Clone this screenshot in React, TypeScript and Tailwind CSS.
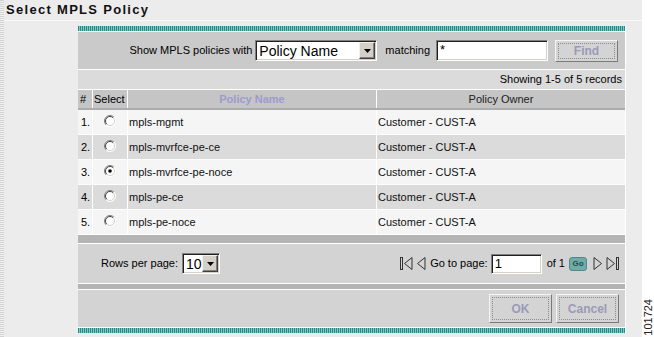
import React from "react";

const font = { fontFamily: "'Liberation Sans', Arial, sans-serif" };

const tealBar =
  "h-[5px] bg-[repeating-linear-gradient(90deg,#2a8c87_0px,#2a8c87_1px,#7fc6c1_1px,#7fc6c1_2px)]";

function Radio({ checked }: { checked?: boolean }) {
  return (
    <svg width="12" height="12" viewBox="0 0 12 12">
      <circle cx="6" cy="6" r="5.5" fill="#ffffff" />
      <path d="M2.1 9.9 A5.5 5.5 0 0 1 9.9 2.1" fill="none" stroke="#808080" strokeWidth="1" />
      <path d="M2.8 9.2 A4.5 4.5 0 0 1 9.2 2.8" fill="none" stroke="#404040" strokeWidth="1" />
      <path d="M9.9 2.1 A5.5 5.5 0 0 1 2.1 9.9" fill="none" stroke="#ffffff" strokeWidth="1" />
      <path d="M9.2 2.8 A4.5 4.5 0 0 1 2.8 9.2" fill="none" stroke="#d4d0c8" strokeWidth="1" />
      {checked && <circle cx="6" cy="6" r="1.8" fill="#000" />}
    </svg>
  );
}

function ArrowBtn() {
  return (
    <div className="w-[16px] h-[17px] bg-[#d4d0c8] border-t border-l border-t-[#f0f0f0] border-l-[#f0f0f0] border-b border-r border-b-[#404040] border-r-[#404040] flex items-center justify-center shadow-[inset_-1px_-1px_0_#808080]">
      <svg width="7" height="4" viewBox="0 0 7 4">
        <path d="M0 0 H7 L3.5 4 Z" fill="#000" />
      </svg>
    </div>
  );
}

function Inset({ className, children }: { className?: string; children?: React.ReactNode }) {
  return (
    <div
      className={
        "bg-white border-t border-l border-t-[#808080] border-l-[#808080] border-b border-r border-b-white border-r-white shadow-[inset_1px_1px_0_#202020,inset_-1px_-1px_0_#d4d0c8] " +
        (className ?? "")
      }
    >
      {children}
    </div>
  );
}

function DisabledButton({ label, className }: { label: string; className?: string }) {
  return (
    <div
      className={
        "bg-[#d4d4d4] border border-t-[#f4f4f4] border-l-[#f4f4f4] border-b-[#7a7a7a] border-r-[#7a7a7a] p-[2px] " +
        (className ?? "")
      }
    >
      <div className="w-full h-full border border-dotted border-[#8c8c8c] flex items-center justify-center text-[12px] font-bold text-[#9a9ab8]">
        {label}
      </div>
    </div>
  );
}

function FirstIcon() {
  return (
    <svg width="13" height="15" viewBox="0 0 13 15">
      <rect x="0.5" y="1.5" width="2" height="12" fill="none" stroke="#333" strokeWidth="1" />
      <path d="M12 1.5 L4.5 7.5 L12 13.5 Z" fill="none" stroke="#333" strokeWidth="1" />
    </svg>
  );
}
function PrevIcon() {
  return (
    <svg width="10" height="15" viewBox="0 0 10 15">
      <path d="M9 1.5 L1.5 7.5 L9 13.5 Z" fill="none" stroke="#333" strokeWidth="1" />
    </svg>
  );
}
function NextIcon() {
  return (
    <svg width="10" height="15" viewBox="0 0 10 15">
      <path d="M1 1.5 L8.5 7.5 L1 13.5 Z" fill="none" stroke="#333" strokeWidth="1" />
    </svg>
  );
}
function LastIcon() {
  return (
    <svg width="13" height="15" viewBox="0 0 13 15">
      <path d="M1 1.5 L8.5 7.5 L1 13.5 Z" fill="none" stroke="#333" strokeWidth="1" />
      <rect x="10.5" y="1.5" width="2" height="12" fill="none" stroke="#333" strokeWidth="1" />
    </svg>
  );
}

const rows = [
  { n: "1.", name: "mpls-mgmt", checked: false },
  { n: "2.", name: "mpls-mvrfce-pe-ce", checked: false },
  { n: "3.", name: "mpls-mvrfce-pe-noce", checked: true },
  { n: "4.", name: "mpls-pe-ce", checked: false },
  { n: "5.", name: "mpls-pe-noce", checked: false },
];

export default function App() {
  return (
    <div className="flex w-[654px] h-[337px] overflow-hidden bg-white text-black" style={font}>
      {/* main gray area */}
      <div className="flex w-[642px] h-full bg-[#ececec]">
        <div className="w-[4px] h-full bg-[repeating-linear-gradient(180deg,#d2d2d2_0px,#d2d2d2_1px,#f2f2f2_1px,#f2f2f2_2px)]" />
        <div className="flex flex-col w-[638px]">
          <div className="h-[20px] flex items-center pl-[2px] text-[13px] font-bold tracking-[1.3px] text-[#111]">
            Select MPLS Policy
          </div>
          <div className="h-[1px] bg-[#f9f9f9]" />
          <div className="ml-[74px] mt-[5px] w-[548px] border-r border-white flex flex-col">
            <div className={tealBar} />
            <div className="h-[1px] bg-white" />
            {/* search */}
            <div className="h-[37px] bg-[#cacaca] flex items-center justify-end pr-[7px] text-[11px]">
              <span className="mr-[3px]">Show MPLS policies with</span>
              <Inset className="w-[122px] h-[21px] flex items-center justify-between pl-[3px] pr-[1px]">
                <span className="text-[14px] leading-none">Policy Name</span>
                <ArrowBtn />
              </Inset>
              <span className="ml-[8px] mr-[6px]">matching</span>
              <Inset className="w-[112px] h-[21px] flex items-start pl-[3px] pt-[2px]">
                <span className="text-[13px] leading-none">*</span>
              </Inset>
              <DisabledButton label="Find" className="ml-[7px] w-[63px] h-[22px]" />
            </div>
            <div className="h-[1px] bg-white" />
            <div className="h-[19px] bg-[#dbdbdb] flex items-center justify-end pr-[3px] text-[11px]">
              Showing 1-5 of 5 records
            </div>
            <div className="h-[1px] bg-white" />
            {/* header */}
            <div className="grid grid-cols-[15px_35px_249px_248px] h-[20px] bg-[#c5c5c5] border-b-2 border-[#acacac] text-[11px]">
              <div className="border-r border-white flex items-center pl-[2px]">#</div>
              <div className="border-r border-white flex items-center pl-[1px]">Select</div>
              <div className="border-r border-white flex items-center justify-center font-bold text-[#9c9ad0]">
                Policy Name
              </div>
              <div className="flex items-center justify-center text-[#222]">Policy Owner</div>
            </div>
            {rows.map((r, i) => (
              <div
                key={r.n}
                className={
                  "grid grid-cols-[15px_35px_249px_248px] h-[25px] border-b border-white text-[11px] " +
                  (i % 2 === 0 ? "bg-[#f5f5f5]" : "bg-[#dbdbdb]")
                }
              >
                <div className="border-r border-white flex items-center pl-[3px]">{r.n}</div>
                <div className="border-r border-white flex items-center justify-center pb-[2px]">
                  <Radio checked={r.checked} />
                </div>
                <div className="border-r border-white flex items-center pl-[1px] text-[#111]">{r.name}</div>
                <div className="flex items-center pl-[1px] text-[#111]">Customer - CUST-A</div>
              </div>
            ))}
            <div className="h-[8px] bg-[#b4b4b4]" />
            <div className="h-[1px] bg-white" />
            {/* pagination */}
            <div className="h-[39px] bg-[#d3d3d3] flex items-center justify-between pl-[23px] pr-[6px] text-[11px]">
              <div className="flex items-center">
                <span className="mr-[4px]">Rows per page:</span>
                <Inset className="w-[38px] h-[21px] flex items-center justify-between pl-[3px] pr-[1px]">
                  <span className="text-[14px] leading-none">10</span>
                  <ArrowBtn />
                </Inset>
              </div>
              <div className="flex items-center">
                <FirstIcon />
                <span className="w-[3px]" />
                <PrevIcon />
                <span className="ml-[4px] mr-[3px]">Go to page:</span>
                <Inset className="w-[51px] h-[20px] flex items-center pl-[3px]">
                  <span className="text-[13px] leading-none">1</span>
                </Inset>
                <span className="ml-[5px] mr-[4px]">of 1</span>
                <div className="w-[18px] h-[14px] rounded-[3px] bg-[#72aaa7] border border-[#4c8b88] flex items-center justify-center text-[8px] font-bold text-[#1d4f4d] mr-[6px]">
                  Go
                </div>
                <NextIcon />
                <span className="w-[3px]" />
                <LastIcon />
              </div>
            </div>
            <div className="h-[1px] bg-white" />
            <div className="h-[5px] bg-[#b4b4b4]" />
            <div className="h-[1px] bg-white" />
            {/* buttons */}
            <div className="h-[37px] bg-[#d3d3d3] flex items-center justify-end pr-[6px]">
              <DisabledButton label="OK" className="w-[63px] h-[29px]" />
              <DisabledButton label="Cancel" className="ml-[4px] w-[63px] h-[29px]" />
            </div>
            <div className="h-[1px] bg-white" />
            <div className={tealBar} />
          </div>
        </div>
      </div>
      {/* right strip */}
      <div className="w-[12px] h-full flex flex-col justify-end items-center pb-[1px]">
        <span className="[writing-mode:vertical-rl] rotate-180 text-[11px] leading-none text-[#222]">101724</span>
      </div>
    </div>
  );
}
